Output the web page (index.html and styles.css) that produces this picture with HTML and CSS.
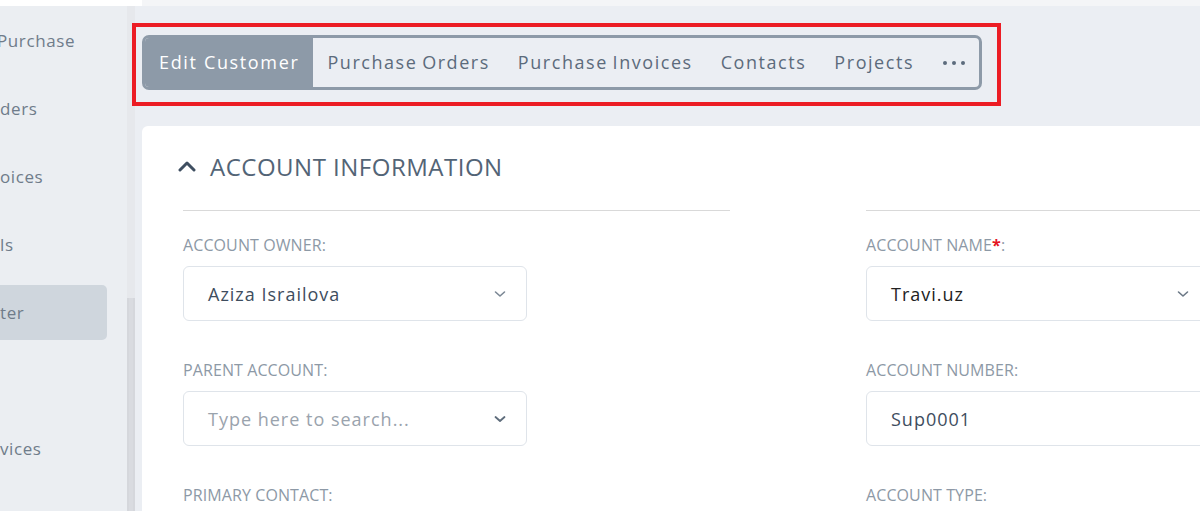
FILE: index.html
```html
<!DOCTYPE html>
<html lang="en">
<head>
<meta charset="utf-8">
<title>Edit Customer</title>
<link rel="stylesheet" href="styles.css">
</head>
<body>
<div class="topbar"><div class="topbar-left"></div><div class="topbar-right"></div></div>
<div class="layout">
  <aside class="sidebar">
    <nav class="side-nav">
      <div class="side-item side-item--first">Purchase</div>
      <div class="side-item">ders</div>
      <div class="side-item">oices</div>
      <div class="side-item">ls</div>
      <div class="side-item side-item--active">ter</div>
      <div class="side-item"></div>
      <div class="side-item">vices</div>
    </nav>
    <div class="scrollbar"><div class="scroll-thumb"></div></div>
  </aside>
  <main class="main">
    <div class="highlight">
      <div class="tabs">
        <div class="tab tab--active">Edit Customer</div>
        <div class="tab">Purchase Orders</div>
        <div class="tab">Purchase Invoices</div>
        <div class="tab">Contacts</div>
        <div class="tab">Projects</div>
        <div class="tab tab--more"><span class="dot"></span><span class="dot"></span><span class="dot"></span></div>
      </div>
    </div>
    <section class="card">
      <h2 class="card-title">
        <svg class="chev-up" width="18" height="12" viewBox="0 0 18 12"><path d="M2 10 L9 3 L16 10" fill="none" stroke="#3f4f61" stroke-width="3" stroke-linecap="round" stroke-linejoin="round"/></svg>
        ACCOUNT INFORMATION
      </h2>
      <div class="columns">
        <div class="column">
          <div class="field">
            <div class="label">ACCOUNT OWNER:</div>
            <div class="input"><span class="value">Aziza Israilova</span>
              <svg class="chev" width="12" height="8" viewBox="0 0 12 8"><path d="M1.5 2 L6 6 L10.5 2" fill="none" stroke="#7b8794" stroke-width="1.6" stroke-linecap="round" stroke-linejoin="round"/></svg></div>
          </div>
          <div class="field">
            <div class="label">PARENT ACCOUNT:</div>
            <div class="input"><span class="value placeholder">Type here to search...</span>
              <svg class="chev" width="12" height="8" viewBox="0 0 12 8"><path d="M1.5 2 L6 6 L10.5 2" fill="none" stroke="#5f6d7c" stroke-width="1.8" stroke-linecap="round" stroke-linejoin="round"/></svg></div>
          </div>
          <div class="field">
            <div class="label">PRIMARY CONTACT:</div>
          </div>
        </div>
        <div class="column">
          <div class="field">
            <div class="label">ACCOUNT NAME<span class="req">*</span>:</div>
            <div class="input"><span class="value dark">Travi.uz</span>
              <svg class="chev" width="12" height="8" viewBox="0 0 12 8"><path d="M1.5 2 L6 6 L10.5 2" fill="none" stroke="#6b7886" stroke-width="1.6" stroke-linecap="round" stroke-linejoin="round"/></svg></div>
          </div>
          <div class="field">
            <div class="label">ACCOUNT NUMBER:</div>
            <div class="input"><span class="value">Sup0001</span></div>
          </div>
          <div class="field">
            <div class="label">ACCOUNT TYPE:</div>
          </div>
        </div>
      </div>
    </section>
  </main>
</div>
</body>
</html>
```
FILE: styles.css
```css
* { box-sizing: border-box; }
html, body {
  margin: 0;
  padding: 0;
  width: 1200px;
  height: 511px;
  overflow: hidden;
  background: #ebeef3;
  font-family: "Open Sans", "Noto Sans", sans-serif;
}
.topbar {
  display: flex;
  height: 6px;
}
.topbar-left { width: 142px; background: #ffffff; }
.topbar-right { flex: 1; background: #f4f5f7; }

.layout {
  display: flex;
  height: 505px;
}
.sidebar {
  width: 135px;
  flex: none;
  display: flex;
  background: #ebeef2;
}
.side-nav {
  width: 127px;
  overflow: hidden;
  padding-top: 7px;
}
.side-item {
  height: 55px;
  margin-bottom: 13px;
  width: 107px;
  border-radius: 0 5px 5px 0;
  display: flex;
  align-items: center;
  font-size: 17px;
  letter-spacing: 0.6px;
  color: #6f7c8a;
  white-space: nowrap;
}
.side-item--first { margin-left: -3px; }
.side-item--active { background: #cfd6dd; }
.scrollbar {
  width: 8px;
  background: #e6e8ec;
  display: flex;
  flex-direction: column;
  padding-top: 292px;
}
.scroll-thumb {
  flex: 1;
  background: #d9dbe0;
  border-left: 2px solid #d5d7dc;
  border-right: 2px solid #d5d7dc;
}

.main {
  flex: 1;
  padding: 17px 0 0 7px;
  min-width: 0;
}
.highlight {
  display: inline-block;
  margin-left: -10px;
  border: 4px solid #ec1c24;
  padding: 8px 15px 12px 6px;
}
.tabs {
  display: flex;
  height: 55px;
  border: 3px solid #8d9aa8;
  border-radius: 7px;
  overflow: hidden;
  background: #ebeef3;
}
.tab {
  display: flex;
  align-items: center;
  padding: 0 14px 2px;
  font-size: 18px;
  letter-spacing: 1.55px;
  word-spacing: -1.5px;
  color: #5c6b7c;
  white-space: nowrap;
}
.tab--active {
  background: #8d9aa8;
  color: #ffffff;
  padding: 0 14px 2px 14px;
  letter-spacing: 1.65px;
  word-spacing: 0;
}
.tab--more {
  gap: 5px;
  padding: 0 14px 0 15px;
}
.dot {
  width: 4px;
  height: 4px;
  border-radius: 50%;
  background: #5c6b7c;
}

.card {
  margin-top: 20px;
  width: 1454px;
  height: 400px;
  background: #ffffff;
  border-radius: 6px;
  padding: 26px 41px 0 41px;
}
.card-title {
  margin: 0 0 28px -4px;
  display: flex;
  align-items: center;
  gap: 14px;
  font-size: 24px;
  font-weight: 400;
  letter-spacing: 0.5px;
  line-height: 30px;
  color: #536476;
  height: 30px;
}
.chev-up { margin-top: -2px; margin-left: -1px; }
.columns {
  display: flex;
  gap: 136px;
}
.column {
  width: 547px;
  border-top: 1px solid #d9d9d9;
  padding-top: 26px;
}
.field { margin-bottom: 41px; }
.label {
  font-size: 16px;
  line-height: 16px;
  letter-spacing: 0.1px;
  color: #8d99a6;
  margin-bottom: 13px;
  white-space: nowrap;
}
.req { color: #e4151f; font-weight: 700; }
.input {
  width: 344px;
  height: 55px;
  border: 1px solid #dfe4ea;
  border-radius: 6px;
  display: flex;
  align-items: center;
  justify-content: space-between;
  padding: 0 20px 0 24px;
}
.value {
  font-size: 18px;
  letter-spacing: 1px;
  color: #3e4d5e;
}
.value.placeholder { color: #9aa3ad; }
.value.dark { color: #222222; }
.chev { flex: none; }
```
